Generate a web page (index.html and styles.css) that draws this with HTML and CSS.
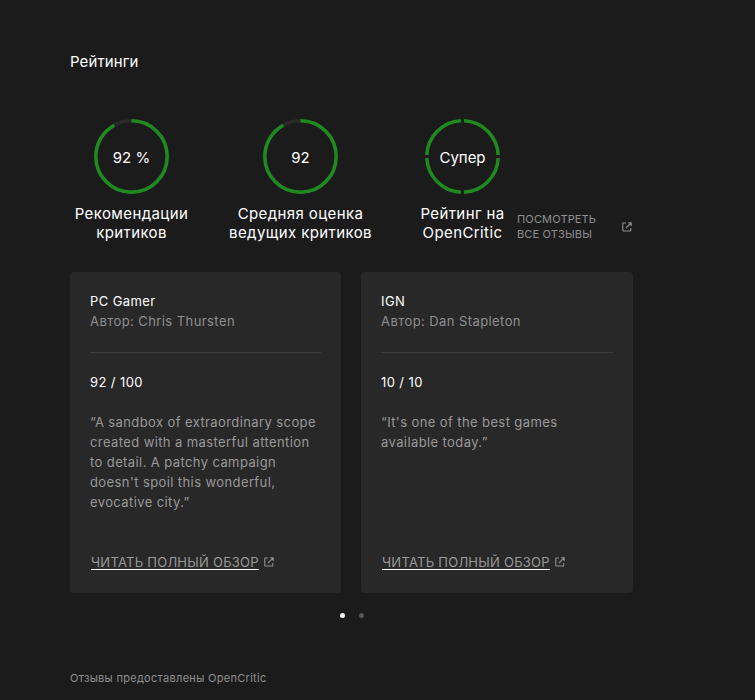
FILE: index.html
```html
<!DOCTYPE html>
<html lang="ru">
<head>
<meta charset="utf-8">
<title>Рейтинги</title>
<link rel="stylesheet" href="styles.css">
</head>
<body>
<main class="page">
  <h2 class="title">Рейтинги</h2>
  <section class="scores">
    <div class="score score-a">
      <div class="gauge">
        <svg class="ring" viewBox="0 0 75 75" width="75" height="75"><circle class="ring-bg" cx="37.5" cy="37.5" r="35.7"/><circle class="ring-fg" cx="37.5" cy="37.5" r="35.7" pathLength="100" stroke-dasharray="92 100" transform="rotate(-90 37.5 37.5)"/></svg>
        <span class="gauge-value">92 %</span>
      </div>
      <div class="score-label">Рекомендации критиков</div>
    </div>
    <div class="score score-b">
      <div class="gauge">
        <svg class="ring" viewBox="0 0 75 75" width="75" height="75"><circle class="ring-bg" cx="37.5" cy="37.5" r="35.7"/><circle class="ring-fg" cx="37.5" cy="37.5" r="35.7" pathLength="100" stroke-dasharray="92 100" transform="rotate(-90 37.5 37.5)"/></svg>
        <span class="gauge-value">92</span>
      </div>
      <div class="score-label">Средняя оценка ведущих критиков</div>
    </div>
    <div class="score score-c">
      <div class="gauge">
        <svg class="ring" viewBox="0 0 75 75" width="75" height="75"><circle class="ring-fg" cx="37.5" cy="37.5" r="35.7" pathLength="100" stroke-dasharray="23.6 1.4" stroke-dashoffset="-0.7" transform="rotate(-90 37.5 37.5)"/></svg>
        <span class="gauge-value">Супер</span>
      </div>
      <div class="score-label">Рейтинг на OpenCritic</div>
    </div>
    <a class="all-reviews">
      <span class="all-text">ПОСМОТРЕТЬ ВСЕ ОТЗЫВЫ</span>
      <svg class="ext ext-all" viewBox="0 0 10 10" width="10" height="10"><path d="M4 1H1.2a.4.4 0 0 0-.4.4v7.2c0 .2.2.4.4.4h7.2a.4.4 0 0 0 .4-.4V6M4 6l5-5M6 .8h3.2V4" fill="none" stroke="currentColor" stroke-width="1.1"/></svg>
    </a>
  </section>
  <section class="cards">
    <article class="card">
      <div class="outlet">PC Gamer</div>
      <div class="author">Автор: Chris Thursten</div>
      <hr class="rule">
      <div class="mark">92 / 100</div>
      <p class="quote">“A sandbox of extraordinary scope created with a masterful attention to detail. A patchy campaign doesn't spoil this wonderful, evocative city.”</p>
      <div class="read"><a class="read-link">ЧИТАТЬ ПОЛНЫЙ ОБЗОР</a><svg class="ext" viewBox="0 0 10 10" width="10" height="10"><path d="M4 1H1.2a.4.4 0 0 0-.4.4v7.2c0 .2.2.4.4.4h7.2a.4.4 0 0 0 .4-.4V6M4 6l5-5M6 .8h3.2V4" fill="none" stroke="currentColor" stroke-width="1.1"/></svg></div>
    </article>
    <article class="card">
      <div class="outlet">IGN</div>
      <div class="author">Автор: Dan Stapleton</div>
      <hr class="rule">
      <div class="mark">10 / 10</div>
      <p class="quote">“It's one of the best games available today.”</p>
      <div class="read"><a class="read-link">ЧИТАТЬ ПОЛНЫЙ ОБЗОР</a><svg class="ext" viewBox="0 0 10 10" width="10" height="10"><path d="M4 1H1.2a.4.4 0 0 0-.4.4v7.2c0 .2.2.4.4.4h7.2a.4.4 0 0 0 .4-.4V6M4 6l5-5M6 .8h3.2V4" fill="none" stroke="currentColor" stroke-width="1.1"/></svg></div>
    </article>
  </section>
  <div class="dots"><span class="dot dot-on"></span><span class="dot"></span></div>
  <footer class="credit">Отзывы предоставлены OpenCritic</footer>
</main>
</body>
</html>
```
FILE: styles.css
```css
* { box-sizing: border-box; }
html, body { margin: 0; height: 100%; }
body {
  background: #1b1b1b;
  color: #fff;
  font-family: Inter, "Noto Sans", sans-serif;
  overflow: hidden;
}
.page { width: 563px; margin-left: 70px; padding-top: 52px; }
.title { margin: 0; font-size: 15px; line-height: 20px; font-weight: 400; letter-spacing: .1px; }
.scores { display: flex; margin-top: 47px; align-items: flex-start; }
.score { display: flex; flex-direction: column; align-items: center; flex: none; }
.score-a { width: 123px; }
.score-b { width: 145px; margin-left: 35px; }
.score-c { width: 109px; margin-left: 35px; }
.gauge { position: relative; width: 75px; height: 75px; margin-bottom: 1px; display: flex; align-items: center; justify-content: center; }
.ring { position: absolute; inset: 0; }
.ring circle { fill: none; stroke-width: 3.5; }
.ring-bg { stroke: #2a2a2a; }
.ring-fg { stroke: #1f8a1f; }
.gauge-value { font-size: 15px; line-height: 20px; margin-top: 2px; }
.score-label { margin-top: 9px; font-size: 15px; line-height: 19px; letter-spacing: .4px; text-align: center; }
.all-reviews { display: flex; align-items: center; justify-content: space-between; width: 115px; margin-top: 93px; color: #8f8f8f; }
.all-text { width: 90px; font-size: 11px; line-height: 15px; letter-spacing: .15px; }
.ext { flex: none; }
.cards { display: grid; grid-template-columns: 271px 272px; gap: 20px; margin-top: 30px; }
.card { display: flex; flex-direction: column; height: 321px; padding: 19px 20px 20px; background: #282828; border-radius: 4px; }
.outlet { font-size: 13px; line-height: 20px; letter-spacing: .4px; }
.author { font-size: 13px; line-height: 20px; color: #8f8f8f; letter-spacing: .42px; }
.rule { width: 100%; height: 1px; margin: 21px 0 19px; border: 0; background: #3d3d3d; flex: none; }
.mark { font-size: 13px; line-height: 20px; letter-spacing: .4px; }
.quote { margin: 20px 0 0; font-size: 13px; line-height: 20px; color: #999; letter-spacing: .4px; }
.read { display: flex; align-items: center; margin-top: auto; margin-bottom: 1px; margin-left: 1px; color: #8f8f8f; }
.read-link { font-size: 13px; line-height: 20px; color: #999; letter-spacing: .25px; text-decoration: underline; text-decoration-color: #fff; text-decoration-thickness: 1px; text-underline-offset: 2px; }
.read .ext { margin-left: 5px; }
.dots { display: flex; justify-content: center; gap: 14px; margin-top: 20px; margin-left: 1px; }
.dot { width: 5px; height: 5px; border-radius: 50%; background: #555; }
.dot-on { background: #f5f5f5; }
.credit { margin-top: 53px; font-size: 11px; line-height: 14px; color: #8f8f8f; letter-spacing: .3px; }
```
